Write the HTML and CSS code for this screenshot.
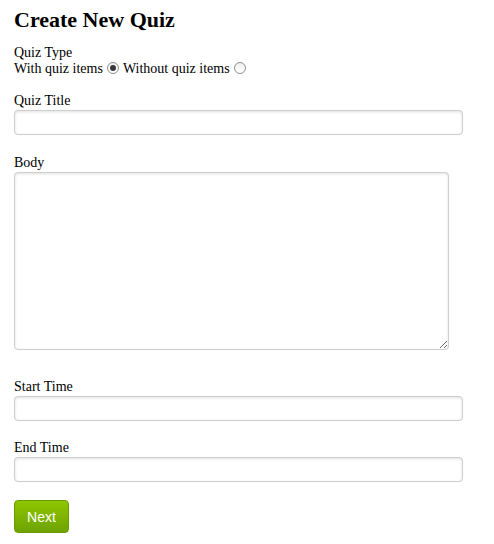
FILE: index.html
```html
<!DOCTYPE html>
<html>
<head>
<meta charset="utf-8">
<link rel="stylesheet" href="styles.css">
</head>
<body>
<form class="quiz-form">
  <h1 class="page-title">Create New Quiz</h1>
  <div class="field field-type">
    <div class="label">Quiz Type</div>
    <div class="radios">
      <label class="radio-label">With quiz items <input type="radio" name="type" class="radio" checked></label>
      <label class="radio-label">Without quiz items <input type="radio" name="type" class="radio"></label>
    </div>
  </div>
  <div class="field field-title">
    <label class="label">Quiz Title</label>
    <input type="text" class="text-input">
  </div>
  <div class="field field-body">
    <label class="label">Body</label>
    <textarea class="text-area"></textarea>
  </div>
  <div class="field field-start">
    <label class="label">Start Time</label>
    <input type="text" class="text-input">
  </div>
  <div class="field field-end">
    <label class="label">End Time</label>
    <input type="text" class="text-input">
  </div>
  <button type="button" class="btn-next">Next</button>
</form>
</body>
</html>
```

FILE: styles.css
```css
html, body {
  margin: 0;
  padding: 0;
  background: #fff;
}
body {
  font-family: "Liberation Serif", "Times New Roman", serif;
  font-size: 14px;
  color: #000;
}
.quiz-form {
  padding: 7px 14px;
  display: flex;
  flex-direction: column;
  align-items: flex-start;
}
.page-title {
  margin: 0;
  font-size: 22px;
  font-weight: bold;
  line-height: 26px;
}
.field {
  display: flex;
  flex-direction: column;
  align-items: flex-start;
}
.label {
  display: block;
  line-height: 16px;
  height: 16px;
}
.field-type {
  margin-top: 12px;
}
.radios {
  display: flex;
  align-items: center;
  line-height: 16px;
}
.radio-label {
  display: inline-flex;
  align-items: center;
  margin-right: 4px;
}
.radio {
  appearance: none;
  -webkit-appearance: none;
  width: 12px;
  height: 12px;
  margin: 0 0 0 4px;
  border: 1px solid #8f8f8f;
  border-radius: 50%;
  background: linear-gradient(#f0f0f0, #fff);
  position: relative;
  top: -1px;
  box-sizing: border-box;
}
.radio:checked::after {
  content: "";
  position: absolute;
  left: 2px;
  top: 2px;
  width: 6px;
  height: 6px;
  border-radius: 50%;
  background: #3a3a3a;
}
.field-title {
  margin-top: 16px;
}
.field-body {
  margin-top: 20px;
}
.field-start {
  margin-top: 29px;
}
.field-end {
  margin-top: 19px;
}
.text-input,
.text-area {
  margin: 1px 0 0;
  box-sizing: border-box;
  border: 1px solid #cfcfcf;
  border-radius: 4px;
  box-shadow: inset 0 1px 3px rgba(0, 0, 0, 0.12), 0 0 1px rgba(0,0,0,0.08);
  background: #fff;
  font-family: inherit;
  font-size: 14px;
  outline: none;
}
.text-input {
  width: 449px;
  height: 25px;
}
.text-area {
  width: 435px;
  height: 178px;
  resize: both;
}
.btn-next {
  margin-top: 18px;
  width: 55px;
  height: 33px;
  border: 1px solid #6a9a00;
  border-radius: 4px;
  background: linear-gradient(#8ec600, #6ea300);
  color: #fff;
  font-family: "Liberation Sans", Arial, sans-serif;
  font-size: 14px;
  padding: 0;
}
```
